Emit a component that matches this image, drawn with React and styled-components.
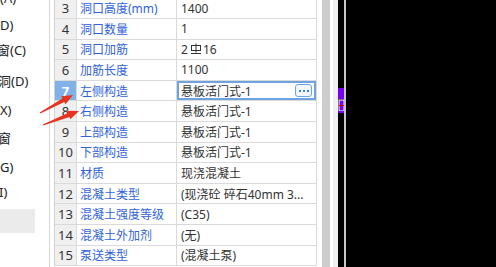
import styled, { createGlobalStyle } from "styled-components";

const Global = createGlobalStyle`
  html, body {
    margin: 0;
    padding: 0;
    background: #000;
    overflow: hidden;
  }
  body {
    font-family: "Noto Sans", "Noto Sans CJK SC", sans-serif;
  }
`;

const Screen = styled.div`
  position: relative;
  display: flex;
  width: 496px;
  height: 267px;
  overflow: hidden;
`;

const LeftPanel = styled.div`
  width: 49px;
  flex-shrink: 0;
  background: #fff;
  border-right: 1px solid #d6d6d6;
  overflow: hidden;
  display: flex;
  flex-direction: column;
`;

const NavItem = styled.div`
  height: 24px;
  flex-shrink: 0;
  margin-top: ${(p) => p.$mt}px;
  margin-left: ${(p) => p.$shift || 0}px;
  display: flex;
  align-items: center;
  font-size: 13px;
  color: #222;
  white-space: nowrap;
  background: ${(p) => (p.$active ? "#ebebeb" : "transparent")};
  width: ${(p) => (p.$active ? "35px" : "auto")};
`;

const TablePane = styled.div`
  width: 268px;
  flex-shrink: 0;
  background: #fff;
  padding-left: 4px;
  overflow: hidden;
`;

const Table = styled.div`
  width: 263px;
  margin-top: -1.6px;
  border-left: 1px solid #d2d2d2;
`;

const Row = styled.div`
  display: grid;
  grid-template-columns: 22px 100px 140px;
  height: 20.6px;
`;

const Cell = styled.div`
  display: flex;
  align-items: center;
  border-right: 1px solid #dadada;
  border-bottom: 1px solid #dadada;
  font-size: 12px;
  white-space: nowrap;
  overflow: hidden;
  min-width: 0;
`;

const NumCell = styled(Cell)`
  justify-content: center;
  font-size: 13px;
  background: ${(p) => (p.$active ? "#80b1e8" : "#f0f0f0")};
  color: ${(p) => (p.$active ? "#fff" : "#333")};
  font-weight: ${(p) => (p.$active ? 700 : 400)};
`;

const NameCell = styled(Cell)`
  padding-left: 3px;
  color: #3263da;
`;

const ValueCell = styled(Cell)`
  padding-left: 4px;
  color: #333;
  justify-content: space-between;
  box-shadow: ${(p) => (p.$active ? "inset 0 0 0 2px #6ea3e2" : "none")};
  padding-right: 4px;
`;

const DotsButton = styled.div`
  width: 15px;
  height: 11px;
  border: 1px solid #6ea3e2;
  border-radius: 3px;
  background: #f3f7fd;
  display: flex;
  align-items: center;
  justify-content: center;
  gap: 2px;
  flex-shrink: 0;

  span {
    width: 2px;
    height: 2px;
    background: #3f7fd6;
  }
`;

const ScrollTrack = styled.div`
  width: 8px;
  flex-shrink: 0;
  background: #cdcdcd;
`;

const Edge = styled.div`
  width: 8px;
  flex-shrink: 0;
  display: flex;
  background: #f0f0f0;
  border-left: 3px solid #fff;
  box-sizing: border-box;
`;

const Canvas = styled.div`
  position: relative;
  flex: 1;
  background: #000;
  display: flex;
`;

const CanvasLine = styled.div`
  width: 2px;
  margin-left: 6px;
  background: #c8c8c8;
`;

const Marker = styled.svg`
  position: absolute;
  left: 0;
  top: 88px;
`;

const Overlay = styled.svg`
  position: absolute;
  left: 0;
  top: 0;
  pointer-events: none;
`;

const navItems = [
  { text: "(A)", mt: -14 },
  { text: "D)", mt: 3 },
  { text: "窗(C)", mt: 0, shift: -3 },
  { text: "洞(D)", mt: 7, shift: -2 },
  { text: "X)", mt: 6 },
  { text: "窗", mt: 3, shift: -2 },
  { text: "G)", mt: 6 },
  { text: "I)", mt: 1, shift: -1 },
  { text: "", mt: 5, active: true },
];

const rows = [
  { n: 3, name: "洞口高度(mm)", value: "1400" },
  { n: 4, name: "洞口数量", value: "1" },
  { n: 5, name: "洞口加筋", value: "rebar" },
  { n: 6, name: "加筋长度", value: "1100" },
  { n: 7, name: "左侧构造", value: "悬板活门式-1", active: true },
  { n: 8, name: "右侧构造", value: "悬板活门式-1" },
  { n: 9, name: "上部构造", value: "悬板活门式-1" },
  { n: 10, name: "下部构造", value: "悬板活门式-1" },
  { n: 11, name: "材质", value: "现浇混凝土" },
  { n: 12, name: "混凝土类型", value: "(现浇砼 碎石40mm 3..." },
  { n: 13, name: "混凝土强度等级", value: "(C35)" },
  { n: 14, name: "混凝土外加剂", value: "(无)" },
  { n: 15, name: "泵送类型", value: "(混凝土泵)" },
];

function RebarSymbol() {
  return (
    <svg width="12" height="12" viewBox="0 0 12 12" style={{ margin: "0 1px 0 2px" }}>
      <rect x="1.5" y="2.5" width="9" height="5" fill="none" stroke="#333" strokeWidth="1" />
      <line x1="6" y1="0.5" x2="6" y2="9.5" stroke="#333" strokeWidth="1" />
      <line x1="1" y1="10.5" x2="11" y2="10.5" stroke="#333" strokeWidth="1" />
    </svg>
  );
}

function arrowPoints(tx, ty, hx, hy) {
  const dx = hx - tx;
  const dy = hy - ty;
  const len = Math.hypot(dx, dy);
  const ux = dx / len;
  const uy = dy / len;
  const px = -uy;
  const py = ux;
  const headLen = 11;
  const bx = hx - ux * headLen;
  const by = hy - uy * headLen;
  const pts = [
    [tx + px * 0.6, ty + py * 0.6],
    [bx + px * 2, by + py * 2],
    [bx + px * 4.5, by + py * 4.5],
    [hx, hy],
    [bx - px * 4.5, by - py * 4.5],
    [bx - px * 2, by - py * 2],
    [tx - px * 0.6, ty - py * 0.6],
  ];
  return pts.map((p) => p.map((v) => v.toFixed(1)).join(",")).join(" ");
}

export default function App() {
  return (
    <>
      <Global />
      <Screen>
        <LeftPanel>
          {navItems.map((it, i) => (
            <NavItem key={i} $mt={it.mt} $shift={it.shift} $active={it.active}>
              {it.text}
            </NavItem>
          ))}
        </LeftPanel>

        <TablePane>
          <Table>
            {rows.map((r) => (
              <Row key={r.n}>
                <NumCell $active={r.active}>{r.n}</NumCell>
                <NameCell>{r.name}</NameCell>
                <ValueCell $active={r.active}>
                  {r.value === "rebar" ? (
                    <span style={{ display: "flex", alignItems: "center" }}>
                      2<RebarSymbol />16
                    </span>
                  ) : (
                    <span>{r.value}</span>
                  )}
                  {r.active && (
                    <DotsButton>
                      <span />
                      <span />
                      <span />
                    </DotsButton>
                  )}
                </ValueCell>
              </Row>
            ))}
          </Table>
        </TablePane>

        <ScrollTrack />
        <Edge />

        <Canvas>
          <Marker width="6" height="26" viewBox="0 0 6 26">
            <rect x="0" y="0" width="6" height="11" fill="#7a00f0" />
            <rect x="1" y="12" width="5" height="11" fill="#7a00f0" stroke="#fff" strokeWidth="1" />
            <line x1="1" y1="17.5" x2="6" y2="17.5" stroke="#e00000" strokeWidth="1" />
            <rect x="0" y="23" width="6" height="2" fill="#7a00f0" />
          </Marker>
          <CanvasLine />
        </Canvas>

        <Overlay width="496" height="267">
          <polygon points={arrowPoints(40, 113, 73, 95)} fill="#e8341f" />
          <polygon points={arrowPoints(43, 125, 79, 111)} fill="#e8341f" />
        </Overlay>
      </Screen>
    </>
  );
}
